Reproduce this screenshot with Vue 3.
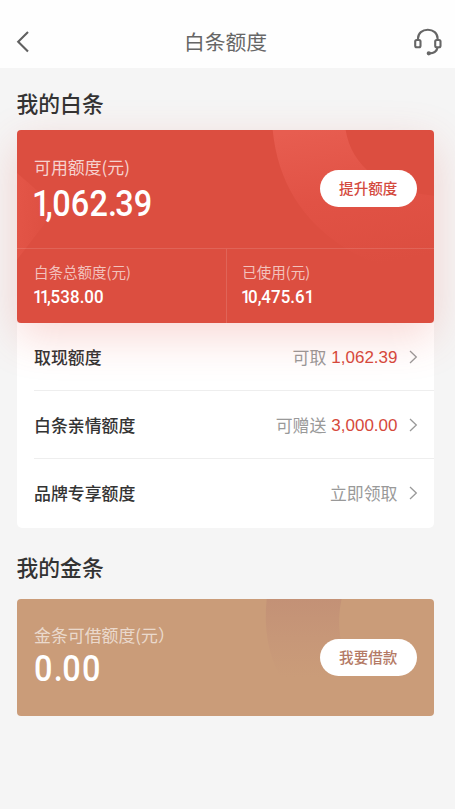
<script setup>
const rows = [
  { name: '取现额度', hint: '可取', value: '1,062.39' },
  { name: '白条亲情额度', hint: '可赠送', value: '3,000.00' },
  { name: '品牌专享额度', hint: '立即领取', value: '' },
]
const kind = (c) => (c === '1' ? 'one' : c === ',' ? 'comma' : c === '.' ? 'dot' : 'digit')
</script>

<template>
  <div class="page">
    <header class="bar">
      <svg class="back" viewBox="0 0 14 24"><path d="M12 2 2.2 11.7 12 21.5" /></svg>
      <h1>白条额度</h1>
      <svg class="service" viewBox="0 0 28 28">
        <path d="M4 12V10.5C4 5.2 8.3 1.8 13.8 1.8S23.6 5.2 23.6 10.5V12" />
        <rect x="1.2" y="12" width="5.3" height="7.2" rx="1.5" />
        <rect x="21.2" y="12" width="5.3" height="7.2" rx="1.5" />
        <path d="M23.6 19.5C22.8 23.5 20 25.2 15.2 25.4" />
        <circle cx="14.8" cy="25.3" r="1.1" />
      </svg>
    </header>

    <main>
      <h2>我的白条</h2>
      <section class="credit">
        <svg class="decor" viewBox="0 0 418 193" preserveAspectRatio="none">
          <defs>
            <linearGradient id="ring" x1="0.2" y1="0" x2="0.4" y2="1">
              <stop offset="0" stop-color="#e75d50" />
              <stop offset="0.5" stop-color="#e15245" />
              <stop offset="1" stop-color="#dc4e40" />
            </linearGradient>
            <linearGradient id="gem" x1="0" y1="0.4" x2="1" y2="0.6">
              <stop offset="0" stop-color="#e35547" />
              <stop offset="1" stop-color="#dc4e40" />
            </linearGradient>
          </defs>
          <path d="M256 0C261 52 286 91 328 118C358 137 388 142 418 142V66C365 61 335 36 329 0Z" fill="url(#ring)" />
          <path d="M0 43 40 78 0 130Z" fill="url(#gem)" />
        </svg>
        <div class="top">
          <div>
            <p class="label">可用额度(元)</p>
            <p class="num"><span v-for="(c, i) in '1,062.39'" :key="i" :class="kind(c)">{{ c }}</span></p>
          </div>
          <button class="pill">提升额度</button>
        </div>
        <div class="split">
          <div class="cell">
            <p class="label">白条总额度(元)</p>
            <p class="num small"><span v-for="(c, i) in '11,538.00'" :key="i" :class="kind(c)">{{ c }}</span></p>
          </div>
          <div class="cell">
            <p class="label">已使用(元)</p>
            <p class="num small"><span v-for="(c, i) in '10,475.61'" :key="i" :class="kind(c)">{{ c }}</span></p>
          </div>
        </div>
      </section>

      <ul class="list">
        <li v-for="row in rows" :key="row.name">
          <span class="name">{{ row.name }}</span>
          <span class="hint">{{ row.hint }}</span>
          <span v-if="row.value" class="value">{{ row.value }}</span>
          <svg class="more" viewBox="0 0 9 14"><path d="M1 1 7.3 7 1 13" /></svg>
        </li>
      </ul>

      <h2 class="second">我的金条</h2>
      <section class="gold">
        <svg class="decor" viewBox="0 0 418 117" preserveAspectRatio="none">
          <defs>
            <linearGradient id="shade" x1="0" y1="0" x2="0" y2="1">
              <stop offset="0" stop-color="#c39176" />
              <stop offset="0.5" stop-color="#c79778" />
              <stop offset="1" stop-color="#ca9c79" />
            </linearGradient>
          </defs>
          <path d="M250 0C247 28 251 56 264 78H340C324 55 319 28 325 0Z" fill="url(#shade)" />
        </svg>
        <div>
          <p class="label">金条可借额度(元）</p>
          <p class="num zero"><span v-for="(c, i) in '0.00'" :key="i" :class="kind(c)">{{ c }}</span></p>
        </div>
        <button class="pill">我要借款</button>
      </section>
    </main>
  </div>
</template>

<style>
body {
  background: #f5f5f5;
}
</style>

<style scoped>
.page {
  min-height: 809px;
  background: #f5f5f5;
  color: #333;
  font-family: 'Noto Sans CJK SC', sans-serif;
}
h1, h2, p, ul {
  margin: 0;
  padding: 0;
}
svg {
  display: block;
  fill: none;
}
.bar {
  display: flex;
  align-items: center;
  justify-content: space-between;
  box-sizing: border-box;
  height: 68px;
  padding: 15px 13.5px 0 16px;
  background: #fefefe;
}
h1 {
  font-size: 20.8px;
  font-weight: 400;
  line-height: 30px;
  color: #666;
  margin: -1.5px 0 0 7.5px;
}
.back {
  width: 14px;
  height: 24px;
  stroke: #606060;
  stroke-width: 2.1;
}
.service {
  width: 28px;
  height: 28px;
  stroke: #666;
  stroke-width: 2.1;
}
main {
  padding: 0 21px 0 16.5px;
}
h2 {
  height: 62px;
  box-sizing: border-box;
  padding-top: 19.5px;
  font-size: 21.8px;
  line-height: 30px;
  font-weight: 500;
}
.credit {
  position: relative;
  z-index: 1;
  height: 192.5px;
  border-radius: 4px;
  background: #dc4e40;
  color: #fff;
  box-shadow: 0 14px 44px rgba(226, 78, 64, 0.22);
}
.decor {
  position: absolute;
  inset: 0;
  width: 100%;
  height: 100%;
  border-radius: 4px;
}
.top, .split {
  position: relative;
  display: flex;
}
.top {
  box-sizing: border-box;
  height: 118.5px;
  padding: 23.5px 17px 0 17.5px;
  justify-content: space-between;
  border-bottom: 1px solid rgba(255, 255, 255, 0.13);
}
.label {
  font-size: 16.9px;
  line-height: 26px;
  color: rgba(255, 255, 255, 0.76);
}
.num {
  display: flex;
  margin: 1px 0 0 -2px;
  transform: scaleX(0.89);
  transform-origin: 0 0;
  font-family: Roboto, sans-serif;
  font-size: 36.5px;
  font-kerning: none;
  line-height: 46px;
  font-weight: 500;
}
.num .digit {
  letter-spacing: 0.005em;
}
.num .one {
  letter-spacing: -0.155em;
}
.num .comma {
  letter-spacing: -0.015em;
}
.num .dot {
  letter-spacing: -0.06em;
}
.pill {
  box-sizing: border-box;
  flex: none;
  width: 97.5px;
  height: 37px;
  margin-top: 16.5px;
  padding: 0 0 2px;
  border: 0;
  border-radius: 19px;
  background: #fff;
  color: #d44a3e;
  font-family: inherit;
  font-size: 14.6px;
  font-weight: 500;
  line-height: 35px;
}
.cell {
  flex: 1;
  box-sizing: border-box;
  height: 74px;
  padding: 10px 0 0 17.5px;
}
.cell + .cell {
  border-left: 1px solid rgba(255, 255, 255, 0.13);
  padding-left: 15.5px;
}
.cell .label {
  font-size: 14.5px;
  color: rgba(255, 255, 255, 0.66);
}
.num.small {
  margin: 1px 0 0 -1px;
  font-size: 19px;
  line-height: 22px;
}
.small .dot {
  letter-spacing: 0;
}
.list {
  list-style: none;
  height: 205px;
  padding-left: 17.5px;
  background: #fff;
  border-radius: 0 0 5px 5px;
}
li {
  display: flex;
  align-items: center;
  box-sizing: border-box;
  height: 68.4px;
  padding-right: 16.5px;
  border-bottom: 1px solid #eee;
  font-size: 16.9px;
}
li:last-child {
  height: 67px;
  border-bottom: 0;
}
.name {
  flex: 1;
  font-weight: 500;
}
.hint {
  color: #999;
}
.value {
  margin-left: 5px;
  padding-top: 3px;
  color: #d6493c;
  font-family: 'Liberation Sans', sans-serif;
  font-size: 17px;
}
.more {
  width: 9px;
  height: 14px;
  margin: 1px 0 0 11px;
  stroke: #999;
  stroke-width: 1.3;
}
.second {
  height: 71px;
  padding-top: 24px;
}
.gold {
  position: relative;
  display: flex;
  justify-content: space-between;
  box-sizing: border-box;
  height: 117px;
  padding: 23px 17px 0 17.5px;
  border-radius: 4px;
  background: #ca9c79;
  color: #fff;
}
.gold > div, .gold .pill {
  position: relative;
}
.gold .label {
  color: rgba(255, 255, 255, 0.64);
}
.gold .pill {
  margin-top: 17px;
  color: #b47a65;
}
.num.zero {
  margin: -2px 0 0 -0.5px;
}
.zero .digit {
  letter-spacing: 0.04em;
}
.zero .dot {
  letter-spacing: -0.02em;
}
</style>
